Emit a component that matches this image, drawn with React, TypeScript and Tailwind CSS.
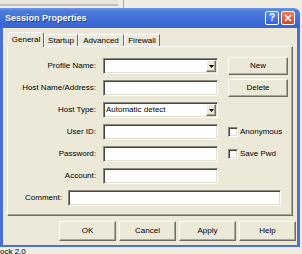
import React from "react";

const sunken =
  "border border-t-[#8a877c] border-l-[#8a877c] border-b-white border-r-white shadow-[inset_1px_1px_0_#4a4840,inset_-1px_-1px_0_#e2dfd2] bg-white";
const raised =
  "border border-t-white border-l-white border-b-[#6f6d63] border-r-[#6f6d63] shadow-[inset_-1px_-1px_0_#aca899] bg-[#ece9d8]";

function Field({ w = 115, children }: { w?: number; children?: React.ReactNode }) {
  return (
    <div className={`${sunken} h-[16px] flex items-center pl-[2px]`} style={{ width: w }}>
      {children}
    </div>
  );
}

function Combo({ text }: { text?: string }) {
  return (
    <div className={`${sunken} w-[115px] h-[16px] flex items-center justify-between pl-[2px] pr-[1px]`}>
      <span className="leading-none">{text}</span>
      <div className={`${raised} w-[10px] h-[12px] flex items-center justify-center`}>
        <svg width="5" height="3" viewBox="0 0 5 3">
          <path d="M0 0H5L2.5 3Z" fill="#000" />
        </svg>
      </div>
    </div>
  );
}

function Btn({ label, w, h }: { label: string; w: number; h: number }) {
  return (
    <div
      className={`${raised} flex items-center justify-center leading-none`}
      style={{ width: w, height: h }}
    >
      {label}
    </div>
  );
}

function Check({ label }: { label: string }) {
  return (
    <div className="flex items-center gap-[2px]">
      <div className={`${sunken} w-[10px] h-[10px]`} />
      <span className="leading-none">{label}</span>
    </div>
  );
}

function Row({ label, children, right }: { label: string; children: React.ReactNode; right?: React.ReactNode }) {
  return (
    <div className="flex items-center h-[22px]">
      <div className="w-[88px] text-right leading-none">{label}</div>
      <div className="ml-[7px]">{children}</div>
      <div className="ml-[10px]">{right}</div>
    </div>
  );
}

export default function App() {
  return (
    <div className="w-[302px] h-[254px] bg-[#efede2] overflow-hidden flex flex-col font-['Liberation_Sans',Arial,sans-serif] text-[8px] text-black">
      {/* strip of window behind */}
      <div className="h-[8px] flex items-start shrink-0">
        <div className="w-[118px] h-[6px] border-b-[2px] border-[#c4c1b4] bg-[#e9e7dc]" />
        <div className="w-[5px]" />
        <div className="w-px h-[8px] bg-[#aeab9f]" />
      </div>

      {/* dialog */}
      <div className="w-[300px] h-[239px] flex flex-col shrink-0">
        <div className="h-[20px] rounded-tr-[6px] bg-[linear-gradient(to_bottom,#7196e8_0%,#4d7bdc_15%,#3f6dd6_60%,#3766d2_100%)] flex items-center pl-[5px] pr-[5px]">
          <span className="text-white font-bold text-[9px] leading-none flex-1 [text-shadow:1px_1px_0_#1c3f9a]">
            Session Properties
          </span>
          <div className="flex gap-[2px]">
            <div className="w-[14px] h-[14px] rounded-[2px] border border-white bg-[linear-gradient(to_bottom,#5b8cf0,#2e62e0)] flex items-center justify-center text-white font-bold text-[10px] leading-none">
              ?
            </div>
            <div className="w-[14px] h-[14px] rounded-[2px] border border-white bg-[linear-gradient(to_bottom,#ec7a5f,#d3492c)] flex items-center justify-center">
              <svg width="8" height="8" viewBox="0 0 8 8">
                <path d="M1 1L7 7M7 1L1 7" stroke="#fff" strokeWidth="1.6" />
              </svg>
            </div>
          </div>
        </div>

        <div className="flex-1 bg-[#ece9d8] border-l-[3px] border-r-[3px] border-b-[2px] border-[#4a71d8] flex flex-col pt-[4px]">
          {/* tabs */}
          <div className="h-[14px] flex items-start ml-[5px] relative z-10">
            <div className="w-[36px] h-[15px] bg-[#ece9d8] border-t border-l border-white border-r border-r-[#6f6d63] rounded-t-[2px] flex items-center justify-center leading-none">
              General
            </div>
            <div className="w-[34px] mt-[2px] h-[12px] border-t border-l border-white border-r border-r-[#6f6d63] flex items-center justify-center leading-none">
              Startup
            </div>
            <div className="w-[46px] mt-[2px] h-[12px] border-t border-l border-white border-r border-r-[#6f6d63] flex items-center justify-center leading-none">
              Advanced
            </div>
            <div className="w-[36px] mt-[2px] h-[12px] border-t border-l border-white border-r border-r-[#6f6d63] flex items-center justify-center leading-none">
              Firewall
            </div>
          </div>

          {/* panel */}
          <div className="ml-[4px] w-[286px] h-[170px] border border-t-white border-l-white border-b-[#6f6d63] border-r-[#6f6d63] shadow-[inset_-1px_-1px_0_#aca899] pt-[8px] flex flex-col">
            <Row label="Profile Name:" right={<Btn label="New" w={60} h={18} />}>
              <Combo />
            </Row>
            <Row label="Host Name/Address:" right={<Btn label="Delete" w={60} h={18} />}>
              <Field />
            </Row>
            <Row label="Host Type:">
              <Combo text="Automatic detect" />
            </Row>
            <Row label="User ID:" right={<Check label="Anonymous" />}>
              <Field />
            </Row>
            <Row label="Password:" right={<Check label="Save Pwd" />}>
              <Field />
            </Row>
            <Row label="Account:">
              <Field />
            </Row>
            <div className="flex items-center h-[22px] pl-[17px]">
              <span className="leading-none">Comment:</span>
              <div className="ml-[6px]">
                <Field w={213} />
              </div>
            </div>
          </div>

          {/* buttons */}
          <div className="mt-[5px] h-[20px] flex justify-end gap-[3px] pr-[1px]">
            <Btn label="OK" w={57} h={20} />
            <Btn label="Cancel" w={57} h={20} />
            <Btn label="Apply" w={57} h={20} />
            <Btn label="Help" w={57} h={20} />
          </div>
        </div>
      </div>

      <div className="h-[7px] overflow-hidden leading-[10px] pl-0">ock 2.0</div>
    </div>
  );
}
